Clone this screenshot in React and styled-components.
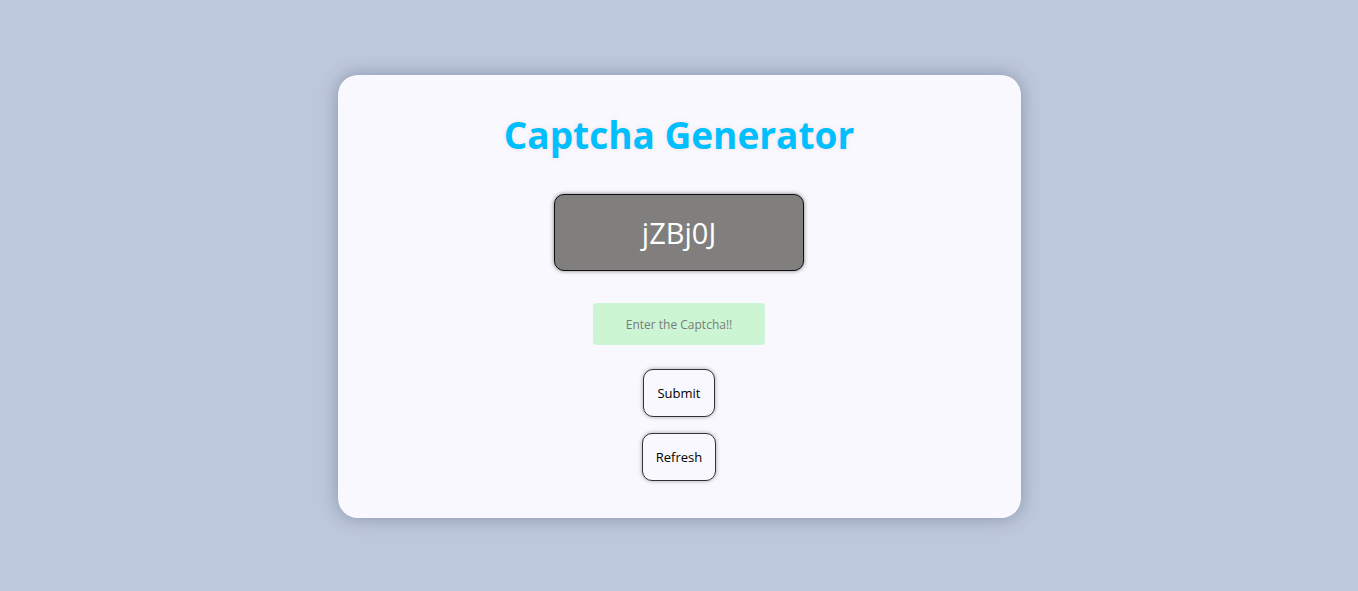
import styled, { createGlobalStyle } from "styled-components";

const GlobalStyle = createGlobalStyle`
    body {
        margin: 0;
        background-color: #bec8dc;
        font-family: "Open Sans", "Noto Sans", sans-serif;
    }
`
const Page = styled.div`
    display: flex;
    justify-content: center;
    padding-top: 75px;
    min-height: 591px;
    box-sizing: border-box;
`
const Card = styled.div`
    width: 683px;
    height: 443px;
    box-sizing: border-box;
    background-color: #f8f8fe;
    border-radius: 20px;
    box-shadow: 0 0 18px rgba(70, 80, 110, 0.45);
    display: flex;
    flex-direction: column;
    align-items: center;
    padding-top: 34px;
`
const Title = styled.h1`
    margin: 0;
    font-size: 37px;
    font-weight: 700;
    color: #00bfff;
    text-shadow: 0 0 4px rgba(255, 180, 150, 0.35);
`
const CaptchaBox = styled.div`
    margin-top: 34px;
    width: 250px;
    height: 77px;
    box-sizing: border-box;
    background-color: #807f7d;
    border: 1px solid #111;
    border-radius: 10px;
    box-shadow: 0 0 4px rgba(0, 0, 0, 0.5);
    display: flex;
    align-items: center;
    justify-content: center;
    color: #fff;
    font-size: 29px;
`
const Input = styled.input`
    margin-top: 32px;
    width: 172px;
    height: 42px;
    box-sizing: border-box;
    border: none;
    border-radius: 4px;
    background-color: #ccf5d4;
    text-align: center;
    font-family: inherit;
    font-size: 12px;
    outline: none;
    &::placeholder {
        color: #7a7a7a;
    }
`
const Button = styled.button`
    margin-top: ${p => p.$gap}px;
    height: 48px;
    padding: 0 13px;
    background-color: #f8f8fe;
    border: 1px solid #333;
    border-radius: 10px;
    box-shadow: 0 0 4px rgba(0, 0, 0, 0.35);
    font-family: inherit;
    font-size: 13px;
    color: #000;
    cursor: pointer;
`

const App = () => {
    return (
        <>
            <GlobalStyle />
            <Page>
                <Card>
                    <Title>Captcha Generator</Title>
                    <CaptchaBox>jZBj0J</CaptchaBox>
                    <Input placeholder="Enter the Captcha!!" />
                    <Button $gap={24}>Submit</Button>
                    <Button $gap={16}>Refresh</Button>
                </Card>
            </Page>
        </>
    )
};

export default App;
